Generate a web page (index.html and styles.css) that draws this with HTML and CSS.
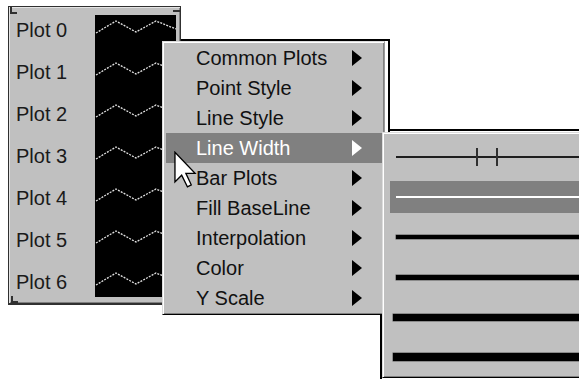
FILE: index.html
```html
<!DOCTYPE html>
<html lang="en">
<head>
    <meta charset="UTF-8">
    <title>Plot Legend Menu</title>
    <link rel="stylesheet" href="styles.css">
</head>
<body>
    <div class="canvas">
        <!-- white panel edges behind the popups -->
        <div class="backdrop backdrop-top"></div>
        <div class="backdrop backdrop-right"></div>
        <div class="backdrop backdrop-bottom"></div>

        <div class="legend">
            <span class="handle handle-tl"></span>
            <span class="handle handle-tr"></span>
            <span class="handle handle-bl"></span>
            <ul class="legend-labels">
                <li>Plot 0</li>
                <li>Plot 1</li>
                <li>Plot 2</li>
                <li>Plot 3</li>
                <li>Plot 4</li>
                <li>Plot 5</li>
                <li>Plot 6</li>
            </ul>
            <div class="legend-plots">
                <svg width="81" height="282" viewBox="0 0 81 282">
                    <g class="wave">
                        <polyline points="1,18 21,6 41,17 61,6 81,14"/>
                        <polyline points="1,60 21,48 41,59 61,48 81,56"/>
                        <polyline points="1,102 21,90 41,101 61,90 81,98"/>
                        <polyline points="1,144 21,132 41,143 61,132 81,140"/>
                        <polyline points="1,186 21,174 41,185 61,174 81,182"/>
                        <polyline points="1,228 21,216 41,227 61,216 81,224"/>
                        <polyline points="1,270 21,258 41,269 61,258 81,266"/>
                    </g>
                </svg>
            </div>
        </div>

        <ul class="menu main-menu">
            <li class="menu-item"><span>Common Plots</span><span class="arrow"></span></li>
            <li class="menu-item"><span>Point Style</span><span class="arrow"></span></li>
            <li class="menu-item"><span>Line Style</span><span class="arrow"></span></li>
            <li class="menu-item active"><span>Line Width</span><span class="arrow"></span></li>
            <li class="menu-item"><span>Bar Plots</span><span class="arrow"></span></li>
            <li class="menu-item"><span>Fill BaseLine</span><span class="arrow"></span></li>
            <li class="menu-item"><span>Interpolation</span><span class="arrow"></span></li>
            <li class="menu-item"><span>Color</span><span class="arrow"></span></li>
            <li class="menu-item"><span>Y Scale</span><span class="arrow"></span></li>
        </ul>

        <ul class="menu sub-menu">
            <li class="width-item">
                <span class="seg seg-first"></span>
                <span class="tick"></span>
                <span class="seg seg-mid"></span>
                <span class="tick"></span>
                <span class="seg seg-rest"></span>
            </li>
            <li class="width-item active"><span class="width-line w2"></span></li>
            <li class="width-item"><span class="width-line w4"></span></li>
            <li class="width-item"><span class="width-line w5"></span></li>
            <li class="width-item wide"><span class="width-line w7"></span></li>
            <li class="width-item wide"><span class="width-line w9"></span></li>
        </ul>

        <svg class="cursor" width="23" height="37" viewBox="0 0 12 19">
            <polygon points="0.5,0.5 0.5,16 4,12.5 7,18.5 9,17.5 6.2,11.5 11,11.5" fill="#fff" stroke="#000" stroke-width="0.7" stroke-linejoin="miter"/>
        </svg>
    </div>
</body>
</html>
```

FILE: styles.css
```css
/* Grundlæggende */
html, body {
    margin: 0;
    padding: 0;
    background: #fff;
}

body {
    font-family: "Liberation Sans", Arial, sans-serif;
    font-size: 20px;
    color: #000;
}

.canvas {
    position: relative;
    width: 579px;
    height: 379px;
    overflow: hidden;
}

/* Sorte kanter bag menuerne */
.backdrop {
    position: absolute;
    box-sizing: border-box;
}

.backdrop-top {
    left: 180px;
    top: 39px;
    width: 210px;
    height: 93px;
    border-top: 2px solid #000;
    border-right: 2px solid #000;
}

.backdrop-right {
    left: 388px;
    top: 129px;
    width: 200px;
    height: 10px;
    border-top: 2px solid #000;
}

.backdrop-bottom {
    left: -2px;
    top: 312px;
    width: 384px;
    height: 80px;
    border-right: 2px solid #000;
}

/* Legende */
.legend {
    position: absolute;
    left: 8px;
    top: 6px;
    width: 173px;
    height: 299px;
    box-sizing: border-box;
    background: #c0c0c0;
    border: 1px solid #303030;
    border-bottom-width: 2px;
    box-shadow: inset 1px 1px 0 #e4e4e4, inset -1px -1px 0 #808080;
    display: flex;
    align-items: flex-start;
    padding-top: 2px;
}

.handle {
    position: absolute;
    border-color: #303030;
    border-style: solid;
    width: 5px;
    height: 5px;
}

.handle-tl {
    left: 1px;
    top: 0;
    border-width: 0 0 2px 2px;
}

.handle-tr {
    right: 0;
    top: 3px;
    width: 7px;
    height: 0;
    border-width: 2px 0 0 0;
}

.handle-bl {
    left: 2px;
    bottom: 0;
    border-width: 0 0 2px 2px;
}

.legend-labels {
    list-style: none;
    margin: 0;
    padding: 0 0 0 7px;
    width: 86px;
    box-sizing: border-box;
}

.legend-labels li {
    height: 42px;
    line-height: 42px;
    color: #1a1a1a;
}

.legend-plots {
    margin-top: 6px;
    width: 81px;
    height: 282px;
    background: #000;
}

.legend-plots svg {
    display: block;
}

.wave polyline {
    fill: none;
    stroke: #e0e0e0;
    stroke-width: 1.3;
    stroke-dasharray: 2 1.2;
}

/* Menuer */
.menu {
    position: absolute;
    margin: 0;
    list-style: none;
    background: #c0c0c0;
    box-sizing: border-box;
    border: 1px solid;
    border-color: #dcdcdc #000 #000 #dcdcdc;
    box-shadow: inset 1px 1px 0 #fff, inset -1px -1px 0 #808080;
}

.main-menu {
    left: 162px;
    top: 41px;
    width: 223px;
    height: 274px;
    padding: 1px 2px 0 3px;
    border-right-color: #9a9a9a;
}

.menu-item {
    height: 30px;
    display: flex;
    align-items: center;
    justify-content: space-between;
    padding: 0 20px 0 30px;
    color: #111;
}

.menu-item.active {
    background: #808080;
    color: #fff;
}

.arrow {
    width: 0;
    height: 0;
    border-top: 8px solid transparent;
    border-bottom: 8px solid transparent;
    border-left: 10px solid #000;
}

.active .arrow {
    border-left-color: #fff;
}

.sub-menu {
    left: 382px;
    top: 132px;
    width: 220px;
    height: 246px;
    padding: 8px 0 0 7px;
    display: flex;
    flex-direction: column;
    gap: 8px;
}

.width-item {
    height: 32px;
    display: flex;
    align-items: center;
    padding-left: 6px;
}

.width-item.wide {
    padding-left: 3px;
}

.width-item.active {
    background: #808080;
}

.seg {
    height: 2px;
    background: #1e1e1e;
}

.seg-first {
    width: 80px;
}

.seg-mid {
    width: 18px;
}

.seg-rest {
    flex: 1;
}

.tick {
    width: 2px;
    height: 18px;
    background: #303030;
}

.width-line {
    flex: 1;
    background: #000;
    box-shadow: 0 0 0 0.5px #555;
}

.width-line.w2 {
    height: 2px;
    background: #fff;
    box-shadow: none;
}

.width-line.w4 { height: 4px; }
.width-line.w5 { height: 5px; }
.width-line.w7 { height: 7px; }
.width-line.w9 { height: 8px; }

/* Musemarkør */
.cursor {
    position: absolute;
    left: 174px;
    top: 151px;
}
```
